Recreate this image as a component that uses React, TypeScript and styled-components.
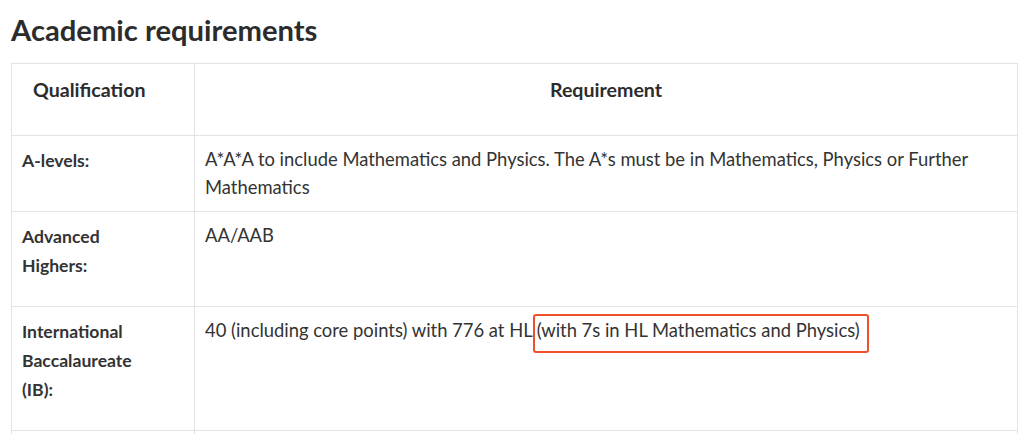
import React from "react";
import styled, { createGlobalStyle } from "styled-components";

const Global = createGlobalStyle`
  html, body { margin: 0; padding: 0; background: #fff; }
  body { font-family: Lato, "Open Sans", sans-serif; color: #333; overflow: hidden; }
  * { box-sizing: border-box; }
`;

const Page = styled.div`
  padding: 8px 6px 0 11px;
`;

const Heading = styled.h2`
  margin: 0 0 11px 0;
  font-size: 29.2px;
  line-height: 44px;
  font-weight: 700;
  color: #2c2c2c;
`;

const Table = styled.table`
  width: 100%;
  border-collapse: collapse;
  table-layout: fixed;
`;

const Th = styled.th<{ $align?: string; $width?: number }>`
  border: 1px solid #e3e3e3;
  text-align: ${(p) => p.$align || "left"};
  padding: 11px 10px 31px ${(p) => (p.$align === "center" ? "10px" : "21px")};
  font-size: 19.6px;
  line-height: 29px;
  font-weight: 700;
  color: #2c2c2c;
  vertical-align: top;
  ${(p) => (p.$width ? `width: ${p.$width}px;` : "")}
`;

const Td = styled.td<{ $label?: boolean }>`
  border: 1px solid #e3e3e3;
  padding: 10px 10px ${(p) => (p.$label ? "26px" : "10px")} 10px;
  vertical-align: top;
  font-size: ${(p) => (p.$label ? "17.6px" : "18.4px")};
  line-height: ${(p) => (p.$label ? "29px" : "27.5px")};
  font-weight: ${(p) => (p.$label ? 700 : 400)};
  color: #333;
`;

const EmptyRow = styled.tr`
  height: 20px;
`;

const Highlight = styled.span`
  border: 2px solid #f0512c;
  border-radius: 3px;
  padding: 3px 7px 10px 2px;
`;

export default function App() {
  return (
    <>
      <Global />
      <Page>
        <Heading>Academic requirements</Heading>
        <Table>
          <thead>
            <tr>
              <Th $width={183}>Qualification</Th>
              <Th $align="center">Requirement</Th>
            </tr>
          </thead>
          <tbody>
            <tr>
              <Td $label>A-levels:</Td>
              <Td>
                A*A*A to include Mathematics and Physics. The A*s must be in
                Mathematics, Physics or Further Mathematics
              </Td>
            </tr>
            <tr>
              <Td $label>
                Advanced
                <br />
                Highers:
              </Td>
              <Td>AA/AAB</Td>
            </tr>
            <tr>
              <Td $label>
                International
                <br />
                Baccalaureate
                <br />
                (IB):
              </Td>
              <Td>
                40 (including core points) with 776 at HL
                <Highlight>(with 7s in HL Mathematics and Physics)</Highlight>
              </Td>
            </tr>
            <EmptyRow>
              <Td $label />
              <Td />
            </EmptyRow>
          </tbody>
        </Table>
      </Page>
    </>
  );
}
